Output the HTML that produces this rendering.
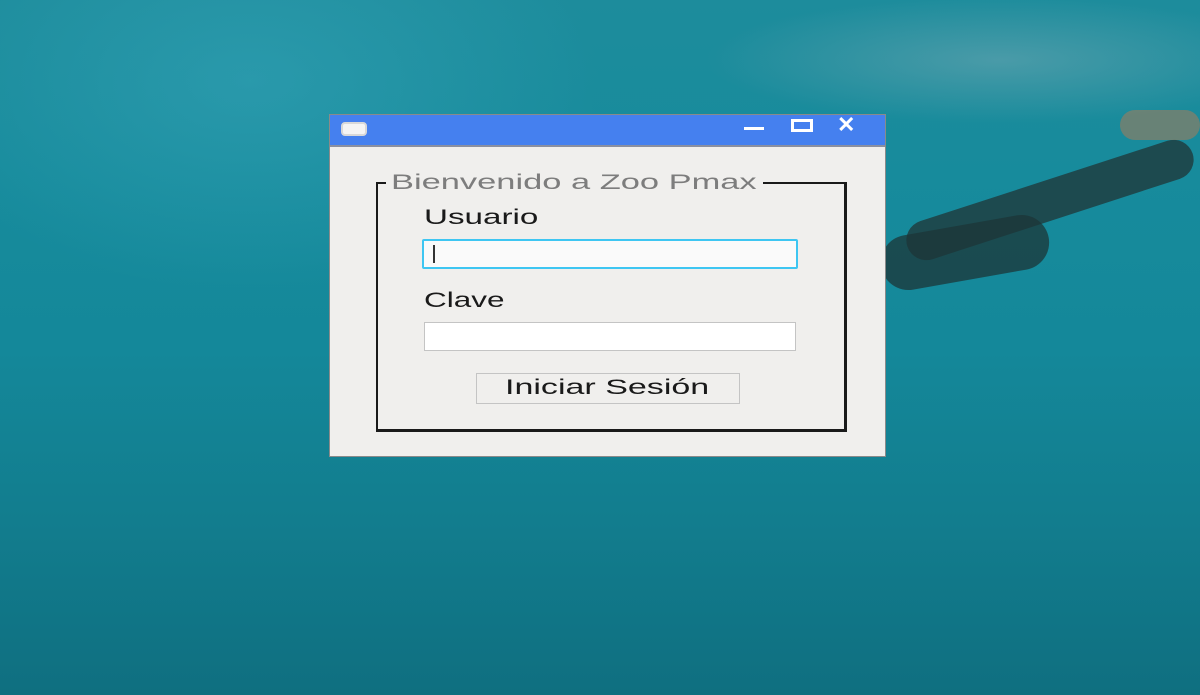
<!DOCTYPE html>
<html><head><meta charset="utf-8"><style>
html,body{margin:0;padding:0;width:1200px;height:695px;overflow:hidden}
body{position:relative;font-family:"Liberation Sans",sans-serif;
background:
radial-gradient(ellipse 420px 90px at 1000px 60px, rgba(120,170,180,.5), transparent 70%),
radial-gradient(ellipse 500px 300px at 250px 80px, rgba(60,170,190,.45), transparent 70%),
linear-gradient(180deg,#1d8c9c 0%,#178b9c 25%,#14889a 50%,#127d8e 75%,#0f6f80 100%);}
.a{position:absolute}
.s{transform:scaleX(1.58);transform-origin:left top;white-space:nowrap}
</style></head><body>
<div class="a" style="left:900px;top:180px;width:300px;height:40px;background:#1f3a3c;border-radius:30px;transform:rotate(-18deg);opacity:.8"></div>
<div class="a" style="left:880px;top:225px;width:170px;height:55px;background:#1c3537;border-radius:40px;transform:rotate(-10deg);opacity:.75"></div>
<div class="a" style="left:1120px;top:110px;width:80px;height:30px;background:#b87a50;border-radius:15px;opacity:.5"></div>
<div class="a" style="left:329px;top:114px;width:555px;height:341px;background:#f0efed;border:1px solid #8a8a8a"></div>
<div class="a" style="left:330px;top:115px;width:555px;height:30px;background:#4580ef;border-bottom:2px solid #8a8fa0"></div>
<div class="a" style="left:341px;top:122px;width:22px;height:10px;border:2px solid #d8d8d8;border-radius:4px;background:#f4f4f4"></div>
<div class="a" style="left:744px;top:127px;width:20px;height:3px;background:#fff"></div>
<div class="a" style="left:791px;top:119px;width:16px;height:7px;border:3px solid #fff"></div>
<div class="a" style="left:837px;top:112px;color:#fff;font-size:22px;font-weight:bold">✕</div>
<div class="a" style="left:376px;top:182px;width:466px;height:245px;border:2px solid #1a1a1a;border-width:2px 3px 3px 2px"></div>
<div class="a" style="left:386px;top:171px;width:377px;height:26px;background:#f0efed"></div>
<div class="a s" style="left:391px;top:171px;color:#7d7d7d;font-size:21px;transform:scaleX(1.64)">Bienvenido a Zoo Pmax</div>
<div class="a s" style="left:424px;top:206px;color:#1a1a1a;font-size:21px">Usuario</div>
<div class="a" style="left:422px;top:239px;width:372px;height:26px;border:2px solid #3ec6f2;border-radius:2px;background:#fafafa"></div>
<div class="a" style="left:433px;top:245px;width:2px;height:18px;background:#333"></div>
<div class="a s" style="left:424px;top:289px;color:#1a1a1a;font-size:21px;transform:scaleX(1.5)">Clave</div>
<div class="a" style="left:424px;top:322px;width:370px;height:27px;border:1px solid #c4c4c4;background:#fff"></div>
<div class="a" style="left:476px;top:373px;width:262px;height:29px;border:1px solid #c4c4c4;background:#f0efed"></div>
<div class="a s" style="left:505px;top:375px;color:#1a1a1a;font-size:21px;line-height:26px;transform:scaleX(1.62)">Iniciar Sesión</div>
</body></html>
